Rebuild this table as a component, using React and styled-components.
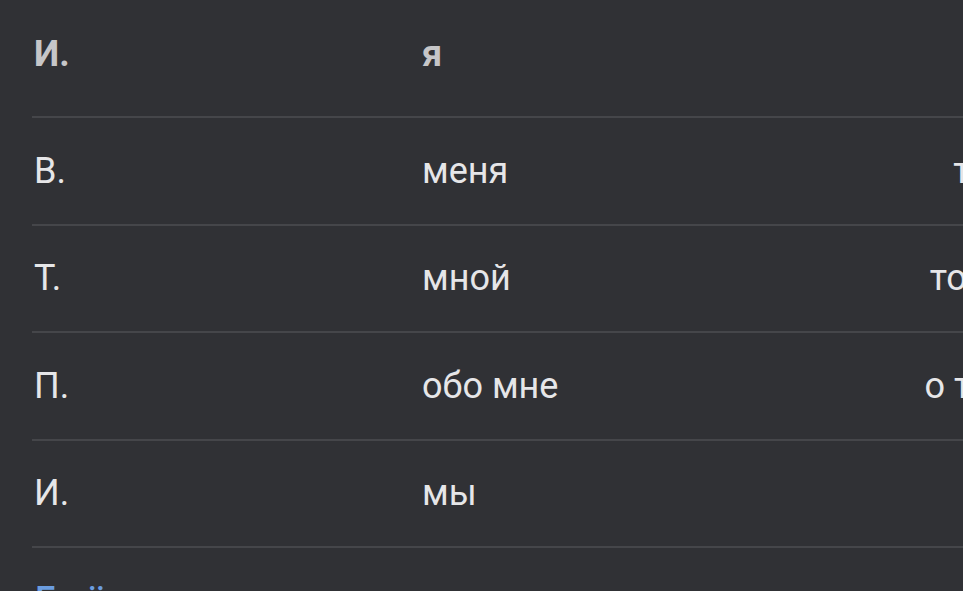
import React from "react";
import styled, { createGlobalStyle } from "styled-components";

const Global = createGlobalStyle`
  html, body {
    margin: 0;
    padding: 0;
    background: #303135;
    overflow: hidden;
  }
  body {
    font-family: Roboto, "Noto Sans", sans-serif;
  }
`;

const Page = styled.div`
  width: 963px;
  height: 591px;
  overflow: hidden;
  background: #303135;
  padding-left: 32px;
  box-sizing: border-box;
`;

const Table = styled.div`
  width: 1200px;
  display: flex;
  flex-direction: column;
`;

const Row = styled.div`
  display: grid;
  grid-template-columns: 388px 388px 220px;
  align-items: center;
  height: ${(p) => (p.$head ? "107px" : "105.5px")};
  padding-bottom: ${(p) => (p.$head ? "9px" : "0")};
  border-bottom: 2px solid #45464a;
  font-size: 36px;
  font-weight: ${(p) => (p.$head ? 700 : 400)};
  color: ${(p) => (p.$head ? "#c6c6c8" : "#e6e6e8")};
  box-sizing: content-box;
`;

const Cell = styled.div`
  padding-left: 2px;
  text-align: ${(p) => (p.$right ? "right" : "left")};
  white-space: nowrap;
`;

const Link = styled.div`
  margin-top: 31px;
  padding-left: 3px;
  font-size: 36px;
  font-weight: 500;
  color: #6b9de0;
  white-space: nowrap;
`;

const rows = [
  ["В.", "меня", "тебя"],
  ["Т.", "мной", "тобой"],
  ["П.", "обо мне", "о тебе"],
  ["И.", "мы", "вы"],
];

export default function App() {
  return (
    <Page>
      <Global />
      <Table>
        <Row $head>
          <Cell>И.</Cell>
          <Cell>я</Cell>
          <Cell $right>ты</Cell>
        </Row>
        {rows.map((r, i) => (
          <Row key={i}>
            <Cell>{r[0]}</Cell>
            <Cell>{r[1]}</Cell>
            <Cell $right>{r[2]}</Cell>
          </Row>
        ))}
      </Table>
      <Link>Ещё о местоимениях</Link>
    </Page>
  );
}
